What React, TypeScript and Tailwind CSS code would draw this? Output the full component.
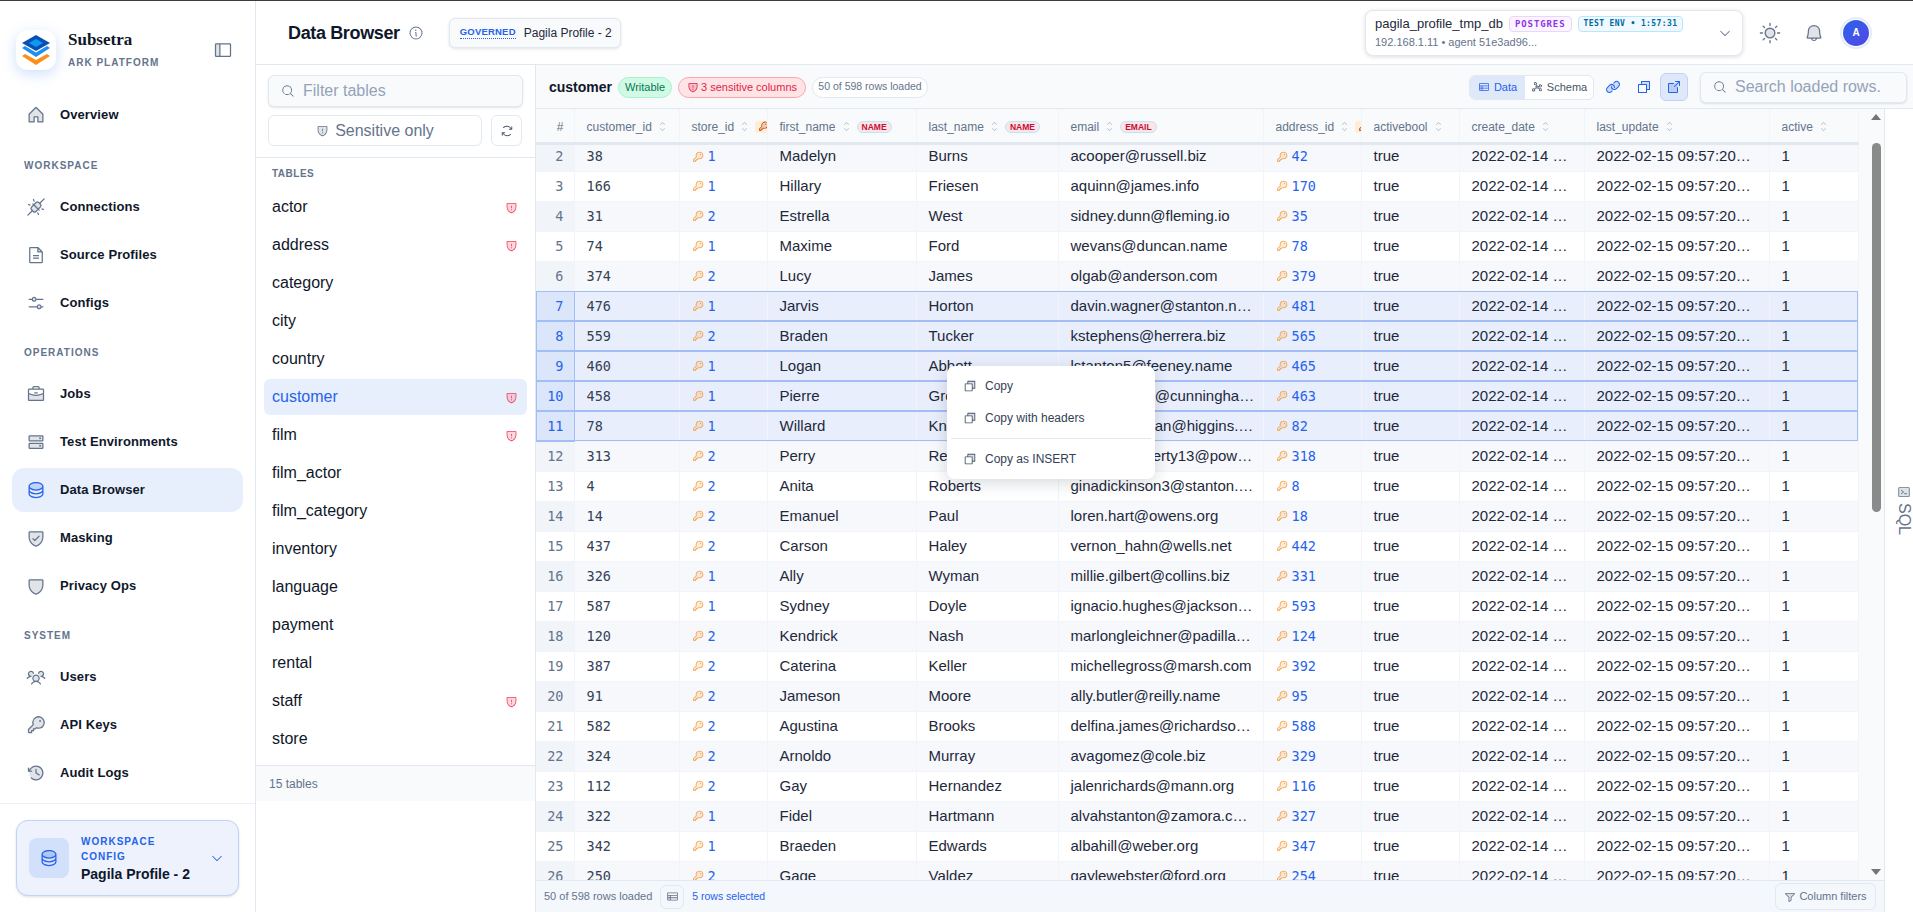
import {
  PiArrowSquareOutDuotone,
  PiArrowsClockwise,
  PiBellDuotone,
  PiBriefcaseDuotone,
  PiCaretDown,
  PiCaretUpDown,
  PiClockCounterClockwiseDuotone,
  PiCopyDuotone,
  PiDatabaseDuotone,
  PiFileTextDuotone,
  PiFunnelDuotone,
  PiGraphDuotone,
  PiHardDrivesDuotone,
  PiHouseDuotone,
  PiInfo,
  PiKeyDuotone,
  PiLinkDuotone,
  PiMagnifyingGlass,
  PiPlugsConnectedDuotone,
  PiShieldCheckDuotone,
  PiShieldDuotone,
  PiShieldWarningDuotone,
  PiSidebarSimpleDuotone,
  PiSlidersHorizontalDuotone,
  PiSunDuotone,
  PiTableDuotone,
  PiTerminalWindowDuotone,
  PiUsersThreeDuotone,
} from "react-icons/pi";

const tables = [
  { name: "actor", sensitive: true },
  { name: "address", sensitive: true },
  { name: "category" },
  { name: "city" },
  { name: "country" },
  { name: "customer", sensitive: true, active: true },
  { name: "film", sensitive: true },
  { name: "film_actor" },
  { name: "film_category" },
  { name: "inventory" },
  { name: "language" },
  { name: "payment" },
  { name: "rental" },
  { name: "staff", sensitive: true },
  { name: "store" },
];

const rows: [number, number, number, string, string, string, number][] = [
  [2, 38, 1, "Madelyn", "Burns", "acooper@russell.biz", 42],
  [3, 166, 1, "Hillary", "Friesen", "aquinn@james.info", 170],
  [4, 31, 2, "Estrella", "West", "sidney.dunn@fleming.io", 35],
  [5, 74, 1, "Maxime", "Ford", "wevans@duncan.name", 78],
  [6, 374, 2, "Lucy", "James", "olgab@anderson.com", 379],
  [7, 476, 1, "Jarvis", "Horton", "davin.wagner@stanton.name", 481],
  [8, 559, 2, "Braden", "Tucker", "kstephens@herrera.biz", 565],
  [9, 460, 1, "Logan", "Abbott", "lstanton5@feeney.name", 465],
  [10, 458, 1, "Pierre", "Green", "pgreenfelder@cunningham.info", 463],
  [11, 78, 1, "Willard", "Knox", "bernadetteryan@higgins.com", 82],
  [12, 313, 2, "Perry", "Reyes", "perry.mcdoherty13@powlowski.com", 318],
  [13, 4, 2, "Anita", "Roberts", "ginadickinson3@stanton.com", 8],
  [14, 14, 2, "Emanuel", "Paul", "loren.hart@owens.org", 18],
  [15, 437, 2, "Carson", "Haley", "vernon_hahn@wells.net", 442],
  [16, 326, 1, "Ally", "Wyman", "millie.gilbert@collins.biz", 331],
  [17, 587, 1, "Sydney", "Doyle", "ignacio.hughes@jackson.com", 593],
  [18, 120, 2, "Kendrick", "Nash", "marlongleichner@padilla.com", 124],
  [19, 387, 2, "Caterina", "Keller", "michellegross@marsh.com", 392],
  [20, 91, 2, "Jameson", "Moore", "ally.butler@reilly.name", 95],
  [21, 582, 2, "Agustina", "Brooks", "delfina.james@richardson.com", 588],
  [22, 324, 2, "Arnoldo", "Murray", "avagomez@cole.biz", 329],
  [23, 112, 2, "Gay", "Hernandez", "jalenrichards@mann.org", 116],
  [24, 322, 1, "Fidel", "Hartmann", "alvahstanton@zamora.co.uk", 327],
  [25, 342, 1, "Braeden", "Edwards", "albahill@weber.org", 347],
  [26, 250, 2, "Gage", "Valdez", "gaylewebster@ford.org", 254],
];

const Logo = () => (
  <svg width="28" height="30" viewBox="0 0 28 30">
    <polygon points="0,13 3,11 14,17.5 25,11 28,13 14,22" fill="#1e90f0" />
    <polygon points="0,21 3,19 14,25 25,19 28,21 14,30" fill="#fb8f1a" />
    <polygon points="14,0 28,8 14,16 0,8" fill="#0b4fb3" />
    <polygon points="14,4 21,8 14,12 7,8" fill="#0a9cf5" />
  </svg>
);

const NavItem = ({ icon: Icon, label, active }: { icon: typeof PiHouseDuotone; label: string; active?: boolean }) => (
  <div className={`flex h-[44px] items-center gap-[14px] rounded-xl pl-[14px] ${active ? "bg-[#e8effc]" : ""}`}>
    <Icon size={20} className={`shrink-0 ${active ? "text-[#2563eb]" : "text-[#64748b]"}`} />
    <span className="text-[13px] font-semibold tracking-[0.1px] text-[#0f172a]">{label}</span>
  </div>
);

const SectionLabel = ({ children }: { children: string }) => (
  <div className="h-4 pl-3 text-[10px] leading-4 font-bold tracking-[1px] text-[#64748b]">{children}</div>
);

const Sidebar = () => (
  <aside className="flex w-[256px] shrink-0 flex-col border-r border-[#e2e8f0] bg-white">
    <div className="flex items-center pt-[27px] pr-[22px] pl-4">
      <div className="flex h-10 w-10 items-center justify-center rounded-xl bg-white shadow-[0_4px_14px_rgba(59,130,246,0.25)]">
        <Logo />
      </div>
      <div className="ml-3 flex-1 pt-[2px]">
        <div className="[font-family:'Liberation_Serif',serif] text-[17px] leading-5 font-bold text-[#0f172a]">Subsetra</div>
        <div className="mt-[5px] text-[10px] leading-4 font-bold tracking-[1px] text-[#64748b]">ARK PLATFORM</div>
      </div>
      <PiSidebarSimpleDuotone size={20} className="text-[#64748b]" />
    </div>
    <nav className="flex flex-1 flex-col px-3 pt-[22px]">
      <NavItem icon={PiHouseDuotone} label="Overview" />
      <div className="mt-[21px] mb-[11px]">
        <SectionLabel>WORKSPACE</SectionLabel>
      </div>
      <div className="flex flex-col gap-1">
        <NavItem icon={PiPlugsConnectedDuotone} label="Connections" />
        <NavItem icon={PiFileTextDuotone} label="Source Profiles" />
        <NavItem icon={PiSlidersHorizontalDuotone} label="Configs" />
      </div>
      <div className="mt-[20px] mb-[11px]">
        <SectionLabel>OPERATIONS</SectionLabel>
      </div>
      <div className="flex flex-col gap-1">
        <NavItem icon={PiBriefcaseDuotone} label="Jobs" />
        <NavItem icon={PiHardDrivesDuotone} label="Test Environments" />
        <NavItem icon={PiDatabaseDuotone} label="Data Browser" active />
        <NavItem icon={PiShieldCheckDuotone} label="Masking" />
        <NavItem icon={PiShieldDuotone} label="Privacy Ops" />
      </div>
      <div className="mt-[20px] mb-[11px]">
        <SectionLabel>SYSTEM</SectionLabel>
      </div>
      <div className="flex flex-col gap-1">
        <NavItem icon={PiUsersThreeDuotone} label="Users" />
        <NavItem icon={PiKeyDuotone} label="API Keys" />
        <NavItem icon={PiClockCounterClockwiseDuotone} label="Audit Logs" />
      </div>
    </nav>
    <div className="border-t border-[#eef2f6] px-4 pt-4 pb-4">
      <div className="flex h-[76px] items-center rounded-xl border border-[#bfd3f8] bg-[#edf2fd] pr-[14px] pl-3 shadow-sm">
        <div className="flex h-10 w-10 items-center justify-center rounded-lg bg-[#d3e0fb]">
          <PiDatabaseDuotone size={20} className="text-[#2563eb]" />
        </div>
        <div className="ml-3 flex-1">
          <div className="text-[10px] leading-[15px] font-bold tracking-[1px] text-[#2563eb]">
            WORKSPACE
            <br />
            CONFIG
          </div>
          <div className="mt-[2px] text-sm leading-4 font-bold text-[#0f172a]">Pagila Profile - 2</div>
        </div>
        <PiCaretDown size={14} className="text-[#2563eb]" />
      </div>
    </div>
  </aside>
);

const TopBar = () => (
  <header className="flex h-[64px] shrink-0 items-center border-b border-[#e2e8f0] bg-white pr-[41px] pl-[32px]">
    <h1 className="text-lg font-bold tracking-[-0.02em] text-[#0f172a]">Data Browser</h1>
    <PiInfo size={16} className="ml-[8px] text-[#64748b]" />
    <div className="ml-[25px] flex h-[30px] items-center gap-[8px] rounded-md border border-[#e2e8f0] bg-[#f8fafc] pr-[8px] pl-[10px] shadow-[0_1px_3px_rgba(15,23,42,0.12)]">
      <span className="border-b border-dotted border-[#2563eb] text-[9.5px] leading-3 font-bold tracking-[0.2px] text-[#2563eb]">GOVERNED</span>
      <span className="text-[12px] text-[#1e293b]">Pagila Profile - 2</span>
    </div>
    <div className="ml-auto flex h-[46px] w-[378px] items-center rounded-lg border border-[#e2e8f0] bg-white pr-[10px] pl-[9px] shadow-[0_1px_4px_rgba(15,23,42,0.14)]">
      <div className="flex-1">
        <div className="flex items-center gap-[6px]">
          <span className="text-[13px] leading-4 font-medium text-[#1e293b]">pagila_profile_tmp_db</span>
          <span className="rounded-[4px] border border-[#e9d5ff] bg-[#faf5ff] px-[5px] [font-family:'DejaVu_Sans_Mono',monospace] text-[9px] leading-[14px] font-bold tracking-[0.9px] text-[#9333ea]">POSTGRES</span>
          <span className="rounded-[4px] border border-[#bae6fd] bg-[#f0f9ff] px-[5px] [font-family:'DejaVu_Sans_Mono',monospace] text-[8px] leading-[14px] font-bold tracking-[0.4px] text-[#0369a1]">TEST ENV • 1:57:31</span>
        </div>
        <div className="mt-[3px] text-[11px] leading-[14px] text-[#64748b]">192.168.1.11 • agent 51e3ad96...</div>
      </div>
      <PiCaretDown size={14} className="text-[#64748b]" />
    </div>
    <PiSunDuotone size={22} className="ml-[16px] text-[#64748b]" />
    <PiBellDuotone size={20} className="ml-[23px] text-[#64748b]" />
    <div className="ml-[16px] flex h-8 w-8 items-center justify-center rounded-full border-[2px] border-[#e6ebfa] bg-white">
      <div className="flex h-[26px] w-[26px] items-center justify-center rounded-full bg-gradient-to-br from-[#2563eb] to-[#4f46e5] text-[10px] font-bold text-white">A</div>
    </div>
  </header>
);

const TablesPanel = () => (
  <div className="flex w-[280px] shrink-0 flex-col border-r border-[#e2e8f0] bg-white">
    <div className="border-b border-[#e2e8f0] px-3 pt-[10px] pb-[11px]">
      <div className="flex h-8 items-center gap-[8px] rounded-md border border-[#e2e8f0] bg-[#f8fafc] pl-[12px] shadow-[0_1px_2px_rgba(15,23,42,0.12)]">
        <PiMagnifyingGlass size={14} className="shrink-0 text-[#64748b]" />
        <input className="min-w-0 flex-1 bg-transparent text-base text-[#0f172a] outline-none placeholder:text-[#94a3b8]" placeholder="Filter tables" />
      </div>
      <div className="mt-2 flex gap-[9px]">
        <button className="flex h-[31px] w-[214px] items-center justify-center gap-[6px] rounded-md border border-[#e2e8f0] bg-white text-base text-[#64748b]">
          <PiShieldWarningDuotone size={13} className="text-[#64748b]" />
          Sensitive only
        </button>
        <button className="flex h-[31px] w-[31px] items-center justify-center rounded-md border border-[#e2e8f0] bg-white">
          <PiArrowsClockwise size={14} className="text-[#475569]" />
        </button>
      </div>
    </div>
    <div className="flex flex-col gap-[2px] px-2 pt-[8px]">
      <div className="mb-[5px] h-4 px-2 text-[10px] leading-4 font-bold tracking-[0.5px] text-[#64748b]">TABLES</div>
      {tables.map((t) => (
        <div key={t.name} className={`flex h-[36px] items-center justify-between rounded-md pr-[9px] pl-2 text-base ${t.active ? "bg-[#e8effc] text-[#2563eb]" : "text-[#0f172a]"}`}>
          {t.name}
          {t.sensitive && <PiShieldWarningDuotone size={13} className="text-[#f43f5e]" />}
        </div>
      ))}
    </div>
    <div className="mt-2 flex h-[36px] items-center border-t border-[#e2e8f0] bg-[#f8fafc] pl-[13px] text-xs text-[#64748b]">15 tables</div>
  </div>
);

const Sort = () => <PiCaretUpDown size={11} className="ml-[5px] shrink-0 text-[#a8b4c4]" />;

const Pii = ({ children }: { children: string }) => (
  <span className="ml-[5px] rounded-full border border-[#bae6fd] bg-[#ffe4e6] px-[4px] text-[8.5px] leading-[10px] font-bold text-[#be123c]">{children}</span>
);

const KeyBadge = () => (
  <span className="ml-[5px] flex h-[12px] w-[20px] shrink-0 items-center rounded-[3px] bg-[#ffedd5] pl-[3px]">
    <PiKeyDuotone size={11} className="text-[#c2410c]" />
  </span>
);

const Th = ({ label, children }: { label: string; children?: React.ReactNode }) => (
  <th className="h-[34px] overflow-hidden border-r border-b-[3px] border-r-[#f1f5f9] border-b-[#e2e8f0] bg-[#f8fafc] p-0 pt-[3px] pl-3 text-left">
    <div className="flex items-center text-xs font-normal whitespace-nowrap text-[#64748b]">
      {label}
      <Sort />
      {children}
    </div>
  </th>
);

const FkCell = ({ value, tdClass }: { value: number; tdClass: string }) => (
  <td className={tdClass}>
    <div className="flex items-center gap-[4px]">
      <PiKeyDuotone size={12} className="shrink-0 text-[#f59e42]" />
      <span className="[font-family:'DejaVu_Sans_Mono',monospace] text-[13.5px] text-[#2563eb]">{value}</span>
    </div>
  </td>
);

const DataTable = () => (
  <table className="w-[1322px] table-fixed">
    <colgroup>
      <col className="w-[38px]" />
      <col className="w-[105px]" />
      <col className="w-[88px]" />
      <col className="w-[149px]" />
      <col className="w-[142px]" />
      <col className="w-[205px]" />
      <col className="w-[98px]" />
      <col className="w-[98px]" />
      <col className="w-[125px]" />
      <col className="w-[185px]" />
      <col className="w-[89px]" />
    </colgroup>
    <thead>
      <tr>
        <th className="h-[34px] border-r border-b-[3px] border-r-[#f1f5f9] border-b-[#e2e8f0] bg-[#f8fafc] p-0 pt-[3px] pr-[10px] text-right text-xs font-normal text-[#64748b]">#</th>
        <Th label="customer_id" />
        <Th label="store_id">
          <KeyBadge />
        </Th>
        <Th label="first_name">
          <Pii>NAME</Pii>
        </Th>
        <Th label="last_name">
          <Pii>NAME</Pii>
        </Th>
        <Th label="email">
          <Pii>EMAIL</Pii>
        </Th>
        <Th label="address_id">
          <KeyBadge />
        </Th>
        <Th label="activebool" />
        <Th label="create_date" />
        <Th label="last_update" />
        <Th label="active" />
      </tr>
    </thead>
    <tbody>
      {rows.map(([n, id, store, first, last, email, address], i) => {
        const selected = n >= 7 && n <= 11;
        const bg = selected ? "bg-[#e8eefb]" : i % 2 === 0 ? "bg-[#f6f8fb]" : "bg-white";
        const numBg = selected ? "bg-[#dbe6fb] text-[#2563eb]" : i % 2 === 0 ? "bg-[#f1f5f9] text-[#64748b]" : "bg-white text-[#64748b]";
        const size = i === 0 ? "h-[28px] pb-[2px]" : "h-[30px]";
        const base = `${size} truncate border-r border-b border-[#f1f5f9] text-[15px] text-[#1e293b]`;
        const td = `${base} px-3`;
        return (
          <tr key={n} className={`${bg} ${selected ? "outline-[1.5px] -outline-offset-1 outline-[#a3bdf7]" : ""}`}>
            <td className={`${size} border-r border-b p-0 pr-[10px] text-right [font-family:'DejaVu_Sans_Mono',monospace] text-[13.5px] ${numBg} ${selected ? "border-[#a3bdf7]" : "border-[#f1f5f9]"}`}>{n}</td>
            <td className={`${td} [font-family:'DejaVu_Sans_Mono',monospace] !text-[13.5px] !text-[#334155]`}>{id}</td>
            <FkCell value={store} tdClass={td} />
            <td className={td}>{first}</td>
            <td className={td}>{last}</td>
            <td className={`${base} pr-2 pl-3`}>{email}</td>
            <FkCell value={address} tdClass={td} />
            <td className={td}>true</td>
            <td className={td}>2022-02-14 00:00:00</td>
            <td className={`${base} pr-4 pl-3`}>2022-02-15 09:57:20.000</td>
            <td className={td}>1</td>
          </tr>
        );
      })}
    </tbody>
  </table>
);

const Scrollbar = () => (
  <div className="flex w-4 shrink-0 flex-col items-center bg-[#f8fafc] pt-[5px]">
    <div className="h-0 w-0 border-x-[5px] border-b-[6px] border-x-transparent border-b-[#757575]" />
    <div className="mt-[23px] h-[369px] w-[9px] rounded-full bg-[#8a8a8a]" />
    <div className="mt-auto mb-[5px] h-0 w-0 border-x-[5px] border-t-[6px] border-x-transparent border-t-[#757575]" />
  </div>
);

const Toolbar = () => (
  <div className="flex h-[44px] shrink-0 items-center border-b border-[#e2e8f0] pt-[1px] pr-[6px] pl-[13px]">
    <span className="text-sm font-bold text-[#0f172a]">customer</span>
    <span className="ml-[6px] flex h-[21px] w-[54px] items-center justify-center rounded-full border border-[#a7f3d0] bg-[#d1fae5] text-[11px] text-[#047857]">Writable</span>
    <span className="ml-[6px] flex h-[21px] w-[128px] items-center justify-center gap-[2px] rounded-full border border-[#fda4af] bg-[#ffe4e6] text-[11px] font-medium text-[#e11d48]">
      <PiShieldWarningDuotone size={12} />3 sensitive columns
    </span>
    <span className="ml-[6px] flex h-[21px] w-[116px] items-center justify-center rounded-full border border-[#e2e8f0] bg-white text-[10.5px] text-[#64748b]">50 of 598 rows loaded</span>
    <div className="ml-auto flex h-[25px] w-[125px] items-stretch overflow-hidden rounded-md border border-[#e2e8f0] bg-white text-[11px]">
      <span className="flex w-[55px] items-center justify-center gap-[4px] bg-[#dfe8f9] text-[#2563eb]">
        <PiTableDuotone size={12} />
        Data
      </span>
      <span className="flex flex-1 items-center justify-center gap-[4px] text-[#475569]">
        <PiGraphDuotone size={12} />
        Schema
      </span>
    </div>
    <PiLinkDuotone size={16} className="ml-[11px] text-[#2563eb]" />
    <PiCopyDuotone size={16} className="ml-[15px] text-[#2563eb]" />
    <span className="ml-[8px] flex h-[28px] w-[28px] items-center justify-center rounded-md border border-[#bfd3f8] bg-[#dfe8f9]">
      <PiArrowSquareOutDuotone size={16} className="text-[#2563eb]" />
    </span>
    <div className="ml-[12px] flex h-[31px] w-[207px] items-center gap-[8px] rounded-md border border-[#e2e8f0] bg-[#f8fafc] pl-[12px] shadow-[0_1px_2px_rgba(15,23,42,0.12)]">
      <PiMagnifyingGlass size={14} className="shrink-0 text-[#64748b]" />
      <input className="min-w-0 flex-1 bg-transparent text-base outline-none placeholder:text-[#94a3b8]" placeholder="Search loaded rows." />
    </div>
  </div>
);

const Browser = () => (
  <div className="flex min-w-0 flex-1 flex-col bg-[#f8fafc]">
    <Toolbar />
    <div className="flex min-h-0 flex-1">
      <div className="flex min-w-0 flex-1 flex-col">
        <div className="flex min-h-0 flex-1">
          <div className="min-w-0 flex-1 overflow-hidden">
            <DataTable />
          </div>
          <Scrollbar />
        </div>
        <div className="flex h-[32px] shrink-0 items-center border-t border-[#e2e8f0] bg-[#f4f7fb] px-[8px]">
          <span className="text-[11px] text-[#64748b]">50 of 598 rows loaded</span>
          <span className="ml-[8px] flex h-[24px] w-[24px] items-center justify-center rounded-md border border-[#e2e8f0]">
            <PiTableDuotone size={13} className="text-[#64748b]" />
          </span>
          <span className="ml-[8px] text-[10.5px] text-[#2563eb]">5 rows selected</span>
          <span className="ml-auto flex h-[27px] w-[101px] items-center justify-center gap-[3px] rounded-md border border-[#e2e8f0] text-[11px] text-[#64748b]">
            <PiFunnelDuotone size={12} />
            Column filters
          </span>
        </div>
      </div>
      <div className="flex w-[29px] shrink-0 flex-col items-center justify-center border-l border-[#e2e8f0] bg-white pl-[9px]">
        <PiTerminalWindowDuotone size={14} className="text-[#64748b]" />
        <span className="mt-[4px] text-base text-[#64748b] [writing-mode:vertical-rl]">SQL</span>
      </div>
    </div>
  </div>
);

const MenuItem = ({ label }: { label: string }) => (
  <div className="flex items-center gap-[8px] pl-[16px] text-xs text-[#334155]">
    <PiCopyDuotone size={14} className="text-[#475569]" />
    {label}
  </div>
);

const App = () => (
  <div className="relative flex h-[912px] w-[1913px] flex-col overflow-hidden bg-white [font-family:'Liberation_Sans',sans-serif]">
    <div className="h-px shrink-0 bg-[#3c3c3c]" />
    <div className="flex min-h-0 flex-1">
      <Sidebar />
      <div className="flex min-w-0 flex-1 flex-col">
        <TopBar />
        <div className="flex min-h-0 flex-1">
          <TablesPanel />
          <Browser />
        </div>
      </div>
    </div>
    {/* Row context menu */}
    <div className="absolute top-[366px] left-[947px] flex h-[113px] w-[208px] flex-col rounded-lg bg-white pt-[12px] shadow-[0_4px_16px_rgba(15,23,42,0.16)]">
      <div className="flex h-[16px] items-center">
        <MenuItem label="Copy" />
      </div>
      <div className="mt-[16px] flex h-[16px] items-center">
        <MenuItem label="Copy with headers" />
      </div>
      <div className="mx-[4px] mt-[12px] h-px bg-[#e2e8f0]" />
      <div className="mt-[12px] flex h-[16px] items-center">
        <MenuItem label="Copy as INSERT" />
      </div>
    </div>
  </div>
);

export default App;
